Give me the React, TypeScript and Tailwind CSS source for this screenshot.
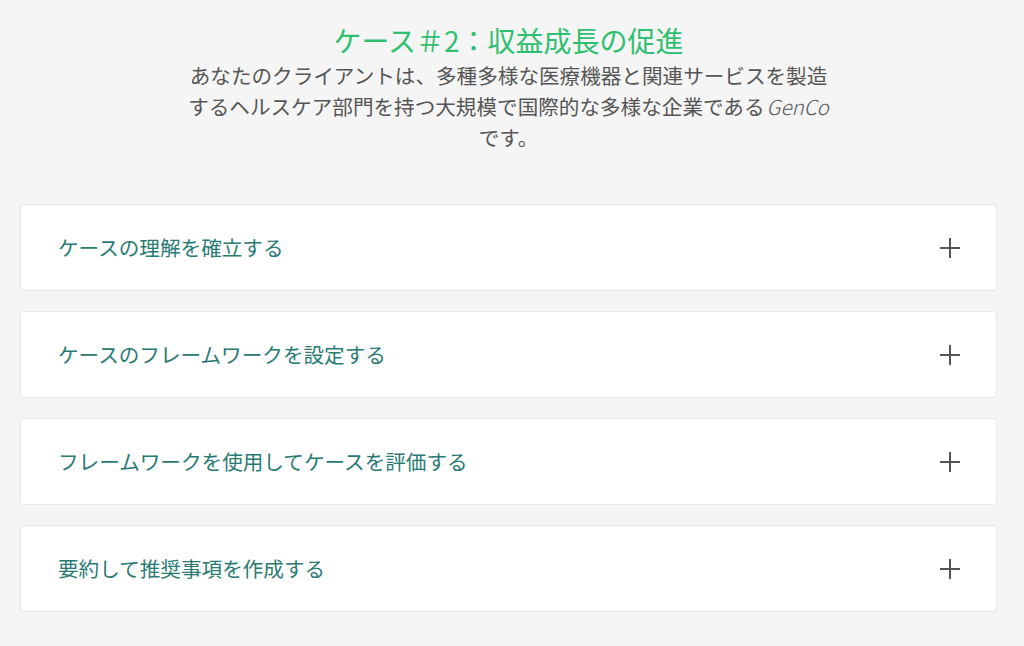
import { useState } from 'react';

const steps = [
  'ケースの理解を確立する',
  'ケースのフレームワークを設定する',
  'フレームワークを使用してケースを評価する',
  '要約して推奨事項を作成する',
];

const PlusIcon = () => (
  <svg width="20" height="20" viewBox="0 0 20 20" className="text-[#555]">
    <path d="M10 0v20M0 10h20" stroke="currentColor" strokeWidth="2" />
  </svg>
);

export default function App() {
  const [open, setOpen] = useState<number | null>(null);

  return (
    <div
      className="min-h-[646px] bg-[#f5f5f5] pl-5 pr-[27px] pt-[22px] pb-8"
      style={{ fontFamily: '"Noto Sans CJK JP", "Noto Sans", sans-serif' }}
    >
      <div className="mx-auto flex max-w-[650px] flex-col items-center text-center">
        <h1 className="text-[28px] leading-[36px] text-[#2fbf71]">ケース＃2：収益成長の促進</h1>
        <p className="mt-[2px] text-[20.6px] leading-[31px] text-[#555]">
          あなたのクライアントは、多種多様な医療機器と関連サービスを製造するヘルスケア部門を持つ大規模で国際的な多様な企業である
          <i className="pl-[2px] font-light italic">GenCo</i>です。
        </p>
      </div>

      <div className="mt-[51px] flex flex-col gap-[20px]">
        {steps.map((s, i) => (
          <div key={s} className="rounded-[3px] border border-[#e6e6e6] bg-white">
            <button
              onClick={() => setOpen(open === i ? null : i)}
              className="flex h-[85px] w-full items-center justify-between pl-[37px] pr-[36px] text-left"
            >
              <span className="text-[20.6px] text-[#2a7a74]">{s}</span>
              <PlusIcon />
            </button>
          </div>
        ))}
      </div>
    </div>
  );
}
